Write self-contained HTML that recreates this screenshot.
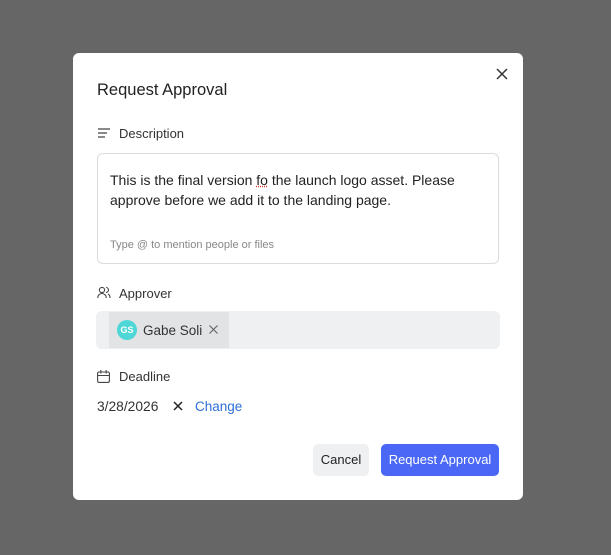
<!DOCTYPE html>
<html><head><style>
*{margin:0;padding:0;box-sizing:border-box}
body{width:611px;height:555px;background:#666666;font-family:"Liberation Sans",sans-serif;position:relative;overflow:hidden;color:#222}
.m{position:absolute;left:73px;top:53px;width:450px;height:447px;background:#fff;border-radius:6px}
.a{position:absolute}
.t{left:24px;top:28px;font-size:16.5px;color:#222}
.lbl{font-size:13px;color:#333}
.box{left:24px;top:100px;width:402px;height:111px;border:1px solid #dcdcdc;border-radius:6px}
.btn{border-radius:5px;font-size:13px;text-align:center;line-height:32px;height:32px}
</style></head><body>
<div class="m">
<div class="a t">Request Approval</div>
<svg class="a" style="left:423px;top:15px" width="12" height="12" viewBox="0 0 12 12"><path d="M1 1L11 11M11 1L1 11" stroke="#333" stroke-width="1.5"/></svg>
<svg class="a" style="left:25px;top:75px" width="13" height="10" viewBox="0 0 13 10"><path d="M0 1H12M0 5H9M0 9H7" stroke="#444" stroke-width="1.2"/></svg>
<div class="a lbl" style="left:46px;top:73px">Description</div>
<div class="a box"></div>
<div class="a" style="left:37px;top:117px;font-size:14px;line-height:20px;color:#222;width:380px">This is the final version <span style="text-decoration:underline dotted #d33">fo</span> the launch logo asset. Please approve before we add it to the landing page.</div>
<div class="a" style="left:37px;top:186px;font-size:11px;color:#888">Type @ to mention people or files</div>
<svg class="a" style="left:24px;top:233px" width="14" height="13" viewBox="0 0 14 13"><circle cx="5" cy="4" r="2.6" fill="none" stroke="#444" stroke-width="1.1"/><path d="M0.8 12c0-3 2-4.5 4.2-4.5s4.2 1.5 4.2 4.5M9 1.5a2.5 2.5 0 0 1 0 5M11 8c1.3.6 2 2 2 4" fill="none" stroke="#444" stroke-width="1.1"/></svg>
<div class="a lbl" style="left:46px;top:233px">Approver</div>
<div class="a" style="left:23px;top:258px;width:404px;height:38px;background:#eef0f1;border-radius:6px"></div>
<div class="a" style="left:36px;top:259px;width:120px;height:36px;background:#e1e3e5"></div>
<div class="a" style="left:44px;top:267px;width:20px;height:20px;border-radius:50%;background:#4fd6d6;color:#fff;font-size:9px;font-weight:bold;text-align:center;line-height:20px">GS</div>
<div class="a" style="left:70px;top:270px;font-size:13.5px;color:#333">Gabe Soli</div>
<svg class="a" style="left:136px;top:272px" width="9" height="9" viewBox="0 0 9 9"><path d="M.5.5L8.5 8.5M8.5.5L.5 8.5" stroke="#666" stroke-width="1.2"/></svg>
<svg class="a" style="left:24px;top:317px" width="13" height="13" viewBox="0 0 13 13"><rect x=".6" y="2" width="11.8" height="10.4" rx="1.5" fill="none" stroke="#444" stroke-width="1.1"/><path d="M.6 5.5H12.4M3.8 0V3.5M9.2 0V3.5" stroke="#444" stroke-width="1.1"/></svg>
<div class="a lbl" style="left:46px;top:316px">Deadline</div>
<div class="a" style="left:24px;top:346px;font-size:13.8px;color:#333">3/28/2026</div>
<svg class="a" style="left:100px;top:348px" width="10" height="10" viewBox="0 0 10 10"><path d="M1 1L9 9M9 1L1 9" stroke="#222" stroke-width="1.5"/></svg>
<div class="a" style="left:122px;top:346px;font-size:13.5px;color:#2f6fd8">Change</div>
<div class="a btn" style="left:240px;top:391px;width:56px;background:#eef0f1;color:#222">Cancel</div>
<div class="a btn" style="left:308px;top:391px;width:118px;background:#4a68f5;color:#fff">Request Approval</div>
</div>
</body></html>
